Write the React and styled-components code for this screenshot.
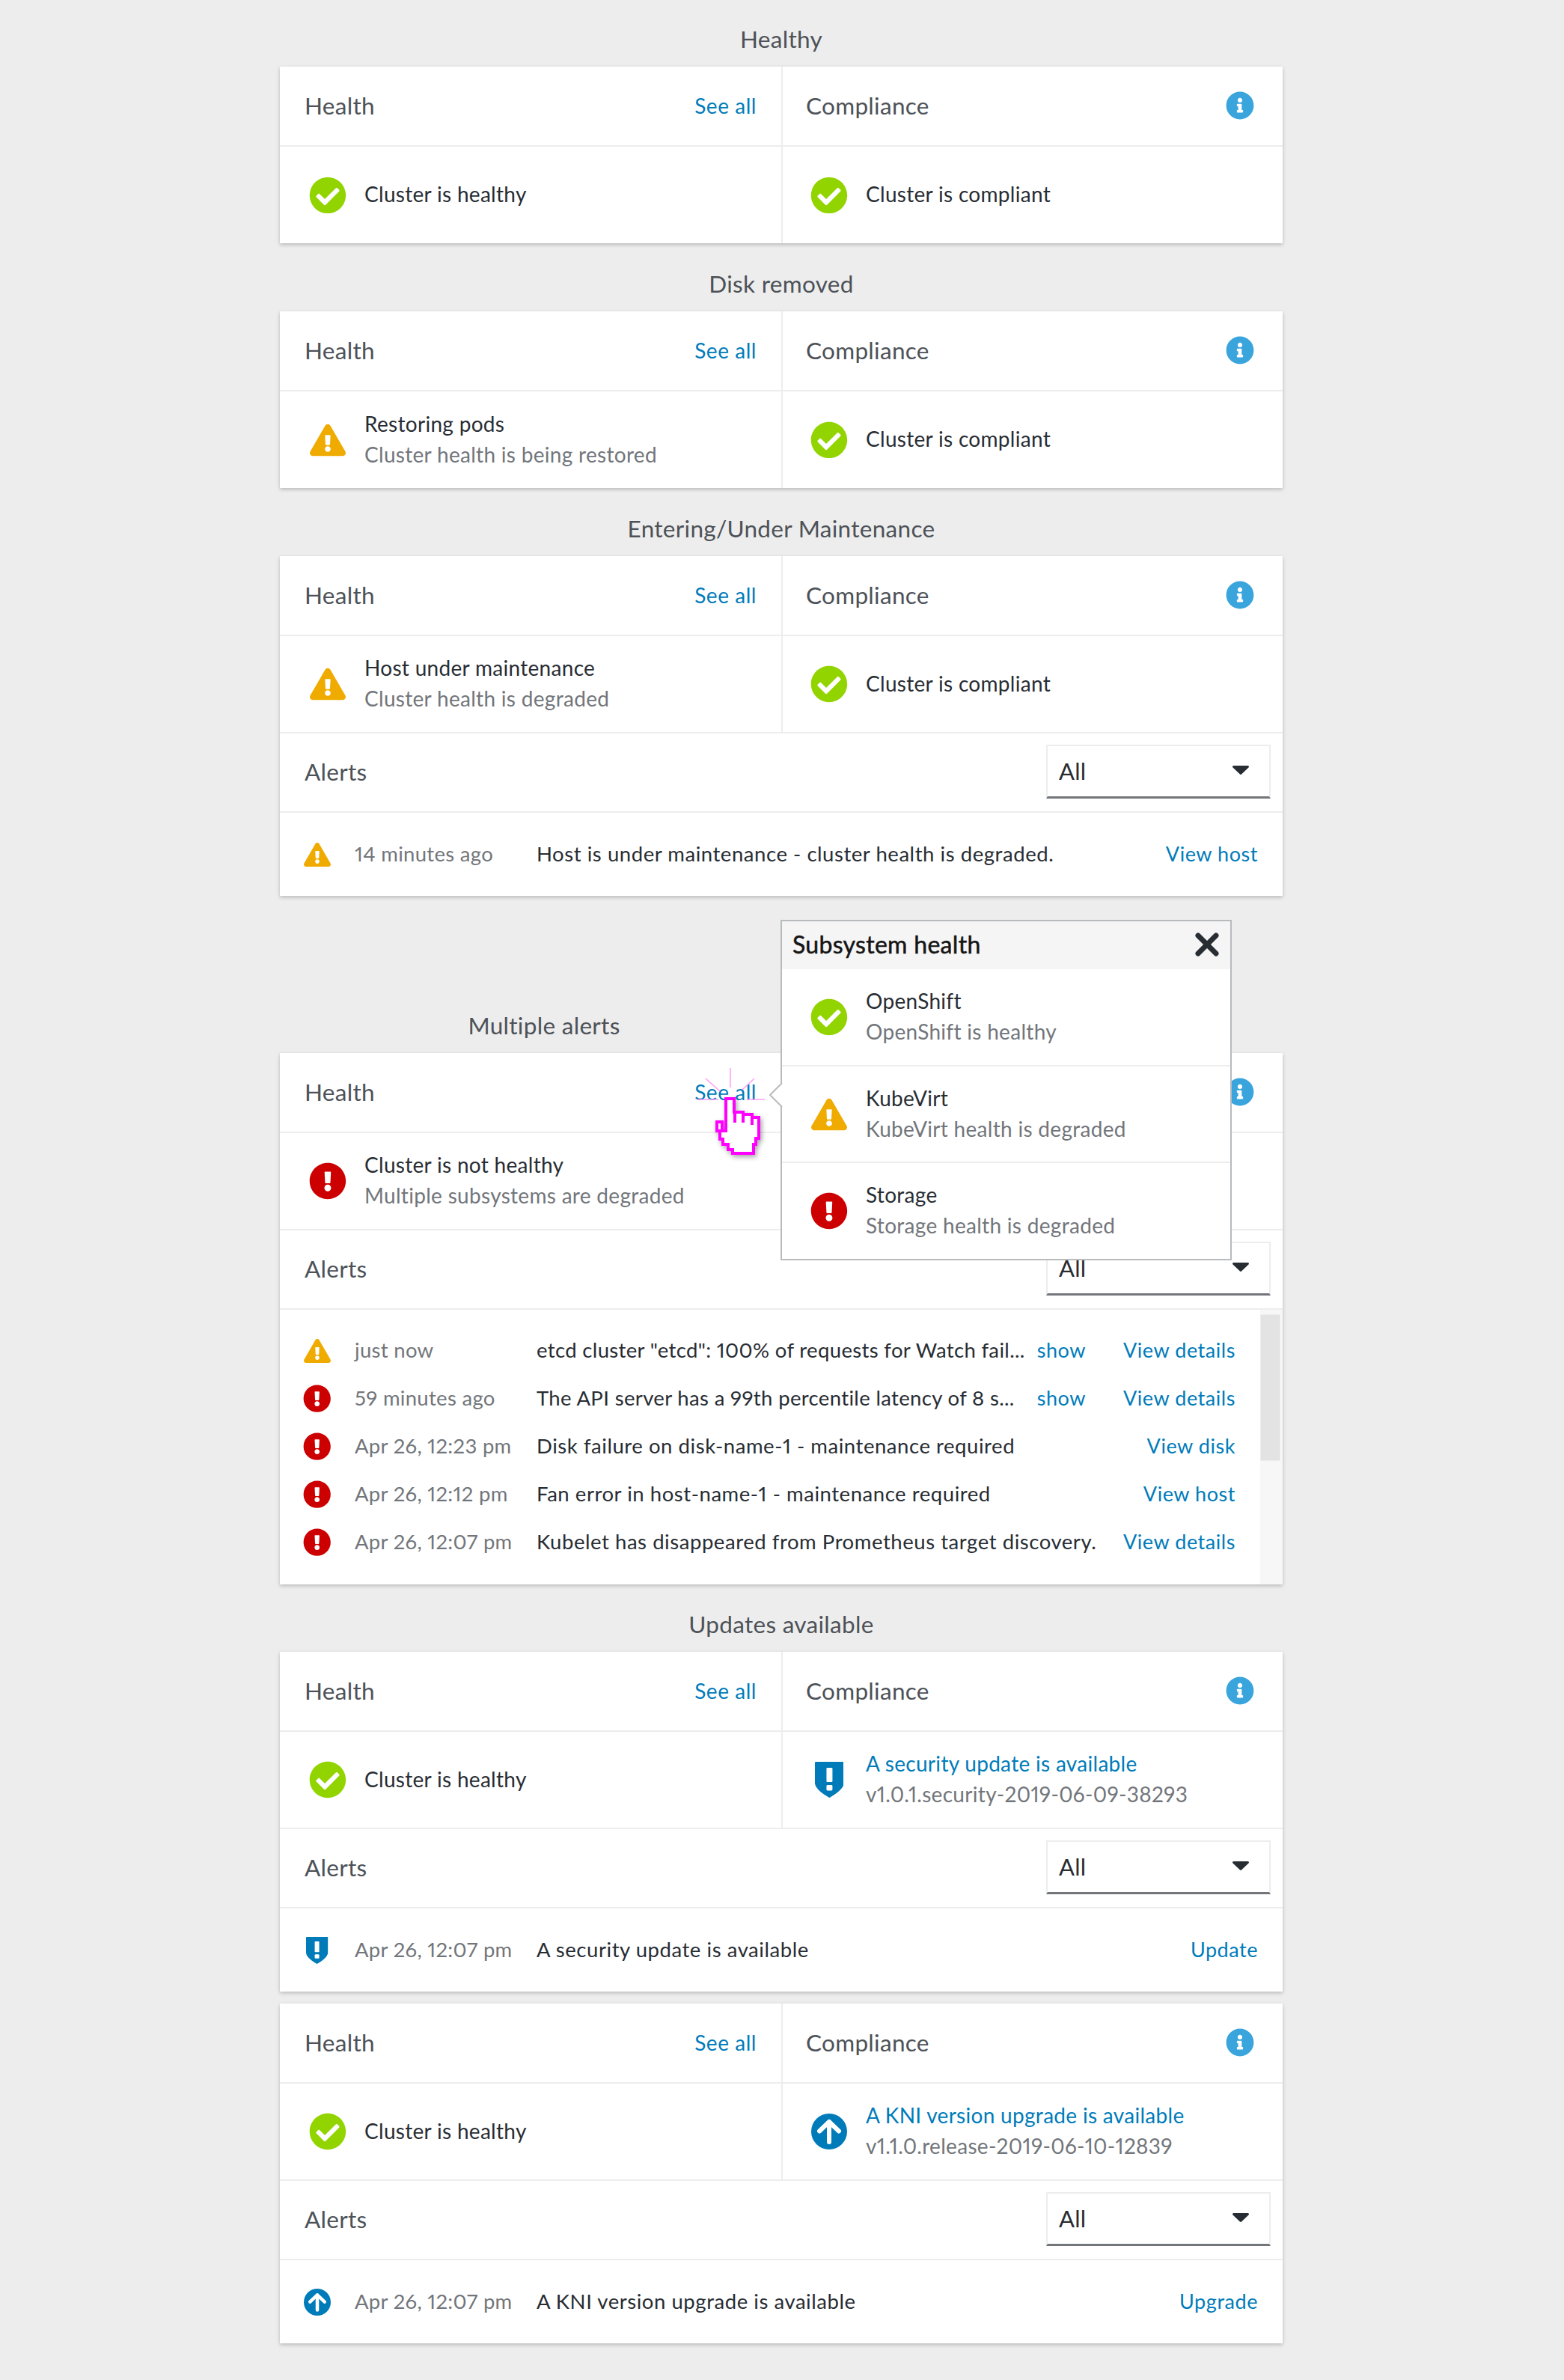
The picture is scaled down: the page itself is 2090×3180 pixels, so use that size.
import React from 'react';
import styled, { createGlobalStyle } from 'styled-components';
import { FaCheckCircle, FaExclamationTriangle, FaExclamationCircle, FaInfoCircle } from 'react-icons/fa';

const Global = createGlobalStyle`
  html, body { margin: 0; padding: 0; background: #ededed; }
  body {
    font-family: "Lato", "Liberation Sans", sans-serif;
    font-size: 28px;
    color: #282d33;
    letter-spacing: 0.3px;
    font-feature-settings: "pnum";
  }
  * { box-sizing: border-box; }
`;

const Page = styled.div`
  width: 2090px;
  height: 3180px;
  padding-left: 374px;
  overflow: hidden;
`;
const Section = styled.section`
  width: 1340px;
  margin-top: ${p => p.$top}px;
  position: relative;
`;
const Title = styled.h2`
  margin: 0;
  height: 74px;
  line-height: 74px;
  font-size: 31.5px;
  font-weight: 400;
  text-align: center;
  color: #4d5258;
  width: ${p => p.$w || '100%'};
`;
const Card = styled.div`
  background: #fff;
  box-shadow: 0 2px 5px rgba(3, 3, 3, 0.22);
`;
const Split = styled.div`
  display: grid;
  grid-template-columns: 670px 2px 1fr;
`;
const VLine = styled.div`
  background: #ededed;
`;
const Pane = styled.div`
  display: flex;
  flex-direction: column;
`;
const PaneHead = styled.div`
  height: 107px;
  border-bottom: 2px solid #ededed;
  display: flex;
  align-items: center;
  justify-content: space-between;
  padding: 0 ${p => p.$right}px 2px ${p => p.$left}px;
`;
const HeadText = styled.span`
  font-size: 31.5px;
  color: #4d5258;
`;
const LinkText = styled.a`
  color: #007bba;
  font-size: 27px;
  letter-spacing: 0.55px;
  text-decoration: none;
  white-space: nowrap;
`;
const SeeAll = styled(LinkText)`
  font-size: 28px;
`;
const PaneBody = styled.div`
  height: ${p => (p.$last ? 129 : 130)}px;
  display: flex;
  align-items: center;
  gap: 25px;
  padding-left: ${p => p.$left}px;
  ${p => (p.$last ? '' : 'border-bottom: 2px solid #ededed;')}
`;
const IconBox = styled.span`
  display: inline-flex;
  align-items: center;
  justify-content: center;
  flex: none;
  width: ${p => p.$size}px;
  height: ${p => p.$size}px;
  color: ${p => p.$color};
  svg { display: block; flex: none; }
`;
const Lines = styled.div`
  display: flex;
  flex-direction: column;
  line-height: 41px;
  padding-bottom: 2px;
`;
const Primary = styled.div`
  color: ${p => (p.$link ? '#007bba' : '#282d33')};
`;
const Secondary = styled.div`
  color: #72767b;
`;
const AlertsHead = styled.div`
  height: 106px;
  border-bottom: 2px solid #ededed;
  display: flex;
  align-items: center;
  justify-content: space-between;
  padding: 0 16px 2px 33px;
`;
const Select = styled.div`
  width: 300px;
  height: 72px;
  border: 2px solid #ededed;
  border-bottom: 3px solid #72767b;
  display: flex;
  align-items: center;
  justify-content: space-between;
  padding: 0 27px 2px 15px;
  font-size: 31px;
  color: #282d33;
`;
const Caret = styled.svg`
  display: block;
  margin-top: -2px;
`;
const AlertRow = styled.div`
  display: flex;
  align-items: center;
  height: ${p => p.$h}px;
  padding: 0 33px 0 32px;
  a { padding-bottom: 3px; }
`;
const Time = styled.span`
  flex: none;
  width: 275px;
  padding: 0 0 3px 32px;
  color: #72767b;
  white-space: nowrap;
  font-size: 27.5px;
`;
const Msg = styled.span`
  flex: 1;
  min-width: 0;
  white-space: nowrap;
  font-size: 27.5px;
  padding-bottom: 3px;
  letter-spacing: ${p => (p.$tight ? 0.35 : 0.55)}px;
`;
const ShowLink = styled(LinkText)`
  margin-right: 50px;
`;
const Scroller = styled.div`
  display: flex;
`;
const List = styled.div`
  flex: 1;
  padding: 23px 0 24px;
`;
const Track = styled.div`
  flex: none;
  width: 30px;
  background: #f7f7f7;
  padding-top: 6px;
`;
const Thumb = styled.div`
  width: 27px;
  height: 196px;
  background: #e3e3e3;
  border: 1px solid #ededed;
`;
const Popover = styled.div`
  position: absolute;
  left: 669px;
  top: 0;
  width: 603px;
  height: 455px;
  background: #fff;
  border: 2px solid #b8bbbe;
  z-index: 5;
  display: flex;
  flex-direction: column;
`;
const PopHead = styled.div`
  height: 64px;
  flex: none;
  background: #f5f5f5;
  display: flex;
  align-items: center;
  justify-content: space-between;
  padding: 0 15px 3px 14px;
  font-size: 32px;
  color: #151515;
  -webkit-text-stroke: 0.5px #151515;
  letter-spacing: 0.3px;
`;
const CloseX = styled.svg`
  display: block;
`;
const PopRow = styled.div`
  height: ${p => (p.$last ? 129 : 131)}px;
  display: flex;
  align-items: center;
  gap: 25px;
  padding-left: 39px;
  ${p => (p.$last ? '' : 'border-bottom: 2px solid #ededed;')}
`;
const PopArrow = styled.svg`
  position: absolute;
  left: -18px;
  top: 215px;
  overflow: visible;
`;
const Cursor = styled.svg`
  position: absolute;
  left: 506px;
  top: 152px;
  z-index: 6;
  overflow: visible;
  pointer-events: none;
`;
const SectionAnchor = styled.div`
  position: absolute;
  left: 0;
  top: -104px;
  width: 100%;
`;

const Check = ({ s = 48 }) => <IconBox $size={s} $color="#92d400"><FaCheckCircle size={s * 1.04} /></IconBox>;
const Warn = ({ s = 48 }) => <IconBox $size={s} $color="#f0ab00"><FaExclamationTriangle size={s} /></IconBox>;
const Danger = ({ s = 48 }) => <IconBox $size={s} $color="#cc0000"><FaExclamationCircle size={s * 1.04} /></IconBox>;
const Shield = ({ s = 48 }) => (
  <IconBox $size={s} $color="#007bba">
    <svg width={s * 0.81} height={s} viewBox="0 0 39 48">
      <path fill="#007bba" d="M1 0H38a1 1 0 0 1 1 1V28C39 36 27 44 19.500 48C12 44 0 36 0 28V1a1 1 0 0 1 1-1Z" />
      <rect x="15.500" y="8" width="8" height="19" rx="1" fill="#fff" />
      <rect x="15.500" y="31" width="8" height="7.500" rx="1.500" fill="#fff" />
    </svg>
  </IconBox>
);
const Upgrade = ({ s = 48 }) => (
  <IconBox $size={s} $color="#007bba">
    <svg width={s} height={s} viewBox="0 0 48 48">
      <circle cx="24" cy="24" r="24" fill="#007bba" />
      <path d="M24 38V11M11 23.500L24 11L37 23.500" fill="none" stroke="#fff" strokeWidth="6" strokeLinecap="round" strokeLinejoin="round" />
    </svg>
  </IconBox>
);

const HealthPane = ({ children, last }) => (
  <Pane>
    <PaneHead $left={33} $right={33}>
      <HeadText>Health</HeadText>
      <SeeAll>See all</SeeAll>
    </PaneHead>
    <PaneBody $left={40} $last={last}>{children}</PaneBody>
  </Pane>
);
const CompliancePane = ({ children, last }) => (
  <Pane>
    <PaneHead $left={31} $right={38}>
      <HeadText>Compliance</HeadText>
      <IconBox $size={38} $color="#39a5dc"><FaInfoCircle size={38} /></IconBox>
    </PaneHead>
    <PaneBody $left={38} $last={last}>{children}</PaneBody>
  </Pane>
);
const HealthCompliance = ({ left, right, last }) => (
  <Split>
    <HealthPane last={last}>{left}</HealthPane>
    <VLine />
    <CompliancePane last={last}>{right}</CompliancePane>
  </Split>
);

const Healthy = () => <><Check /><Lines><Primary>Cluster is healthy</Primary></Lines></>;
const Compliant = () => <><Check /><Lines><Primary>Cluster is compliant</Primary></Lines></>;

const Status = ({ icon, title, sub, link }) => (
  <>{icon}<Lines><Primary $link={link}>{title}</Primary><Secondary>{sub}</Secondary></Lines></>
);

const Alerts = () => (
  <AlertsHead>
    <HeadText>Alerts</HeadText>
    <Select>
      All
      <Caret width="22" height="12" viewBox="0 0 22 12"><path d="M1.500 0H20.500a1.400 1.400 0 0 1 1 2.400L12 11.500a1.400 1.400 0 0 1-2 0L.5 2.400A1.400 1.400 0 0 1 1.500 0Z" fill="#282d33" /></Caret>
    </Select>
  </AlertsHead>
);

const SingleAlert = ({ icon, time, msg, action }) => (
  <AlertRow $h={111}>
    {icon}
    <Time>{time}</Time>
    <Msg>{msg}</Msg>
    <LinkText>{action}</LinkText>
  </AlertRow>
);

const rows = [
  { i: <Warn s={36} />, t: 'just now', m: 'etcd cluster "etcd": 100% of requests for Watch fail...', show: true, a: 'View details' },
  { i: <Danger s={36} />, t: '59 minutes ago', m: 'The API server has a 99th percentile latency of 8 s...', show: true, a: 'View details' },
  { i: <Danger s={36} />, t: 'Apr 26, 12:23 pm', m: 'Disk failure on disk-name-1 - maintenance required', a: 'View disk' },
  { i: <Danger s={36} />, t: 'Apr 26, 12:12 pm', m: 'Fan error in host-name-1 - maintenance required', a: 'View host' },
  { i: <Danger s={36} />, t: 'Apr 26, 12:07 pm', m: 'Kubelet has disappeared from Prometheus target discovery.', a: 'View details' },
];

const HandCursor = () => (
  <Cursor width="200" height="200" viewBox="0 0 200 200">
    <defs>
      <filter id="hs" x="-30%" y="-30%" width="160%" height="160%">
        <feDropShadow dx="2" dy="3" stdDeviation="3" floodColor="#000" floodOpacity="0.35" />
      </filter>
    </defs>
    <g stroke="#ff9cf5" strokeWidth="1.500" fill="none">
      <path d="M96 46V72M63 60L82 77M128 60L112 75M52 88H80M118 88H142" />
    </g>
    <g filter="url(#hs)">
      <path
        d="M90 87H101V105H113V108H125V112H134V140H130V148H127V160H99V155H93V148H86V141H82V130H78V118H85V130H90Z"
        fill="#fff"
        stroke="#ff00ff"
        strokeWidth="4"
      />
    </g>
    <path d="M102 105V119M113 108V119M125 112V122" stroke="#ff00ff" strokeWidth="4" fill="none" />
  </Cursor>
);

export default function App() {
  return (
    <Page>
      <Global />
      <Section $top={15}>
        <Title>Healthy</Title>
        <Card><HealthCompliance last left={<Healthy />} right={<Compliant />} /></Card>
      </Section>
      <Section $top={17}>
        <Title>Disk removed</Title>
        <Card>
          <HealthCompliance last
            left={<Status icon={<Warn />} title="Restoring pods" sub="Cluster health is being restored" />}
            right={<Compliant />} />
        </Card>
      </Section>
      <Section $top={17}>
        <Title>Entering/Under Maintenance</Title>
        <Card>
          <HealthCompliance
            left={<Status icon={<Warn />} title="Host under maintenance" sub="Cluster health is degraded" />}
            right={<Compliant />} />
          <Alerts />
          <SingleAlert icon={<Warn s={36} />} time="14 minutes ago" msg="Host is under maintenance - cluster health is degraded." action="View host" />
        </Card>
      </Section>
      <Section $top={136}>
        <Title $w="706px">Multiple alerts</Title>
        <Card>
          <Split>
            <HealthPane>
              <Status icon={<Danger />} title="Cluster is not healthy" sub="Multiple subsystems are degraded" />
            </HealthPane>
            <VLine />
            <CompliancePane />
          </Split>
          <Alerts />
          <Scroller>
            <List>
              {rows.map(r => (
                <AlertRow key={r.t} $h={64}>
                  {r.i}
                  <Time>{r.t}</Time>
                  <Msg $tight={r.show}>{r.m}</Msg>
                  {r.show && <ShowLink>show</ShowLink>}
                  <LinkText>{r.a}</LinkText>
                </AlertRow>
              ))}
            </List>
            <Track><Thumb /></Track>
          </Scroller>
        </Card>
        <SectionAnchor>
          <Popover>
            <PopHead>
              Subsystem health
              <CloseX width="32" height="32" viewBox="0 0 32 32"><path d="M4 4L28 28M28 4L4 28" stroke="#282d33" strokeWidth="7" strokeLinecap="round" /></CloseX>
            </PopHead>
            <PopRow><Status icon={<Check />} title="OpenShift" sub="OpenShift is healthy" /></PopRow>
            <PopRow><Status icon={<Warn />} title="KubeVirt" sub="KubeVirt health is degraded" /></PopRow>
            <PopRow $last><Status icon={<Danger />} title="Storage" sub="Storage health is degraded" /></PopRow>
            <PopArrow width="18" height="34" viewBox="0 0 18 34">
              <path d="M18 1L2 17L18 33" fill="#fff" stroke="#b8bbbe" strokeWidth="2" />
            </PopArrow>
          </Popover>
          <HandCursor />
        </SectionAnchor>
      </Section>
      <Section $top={16}>
        <Title>Updates available</Title>
        <Card>
          <HealthCompliance
            left={<Healthy />}
            right={<Status link icon={<Shield />} title="A security update is available" sub="v1.0.1.security-2019-06-09-38293" />} />
          <Alerts />
          <SingleAlert icon={<Shield s={36} />} time="Apr 26, 12:07 pm" msg="A security update is available" action="Update" />
        </Card>
      </Section>
      <Section $top={16}>
        <Card>
          <HealthCompliance
            left={<Healthy />}
            right={<Status link icon={<Upgrade />} title="A KNI version upgrade is available" sub="v1.1.0.release-2019-06-10-12839" />} />
          <Alerts />
          <SingleAlert icon={<Upgrade s={36} />} time="Apr 26, 12:07 pm" msg="A KNI version upgrade is available" action="Upgrade" />
        </Card>
      </Section>
    </Page>
  );
}
